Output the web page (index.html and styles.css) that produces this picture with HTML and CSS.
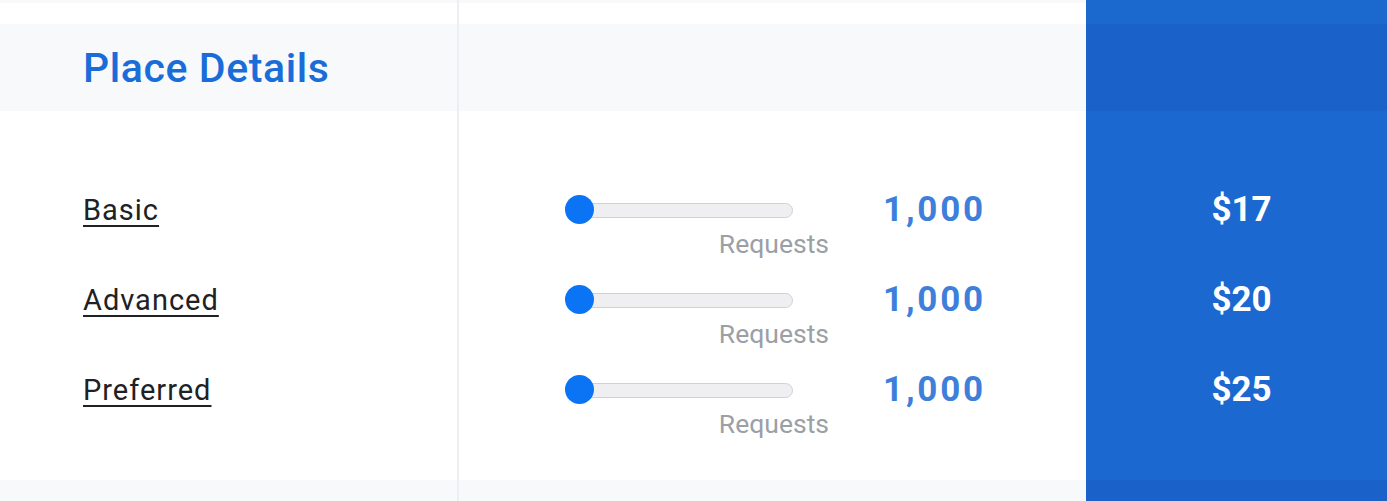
FILE: index.html
```html
<!DOCTYPE html>
<html>
<head>
<meta charset="utf-8">
<link rel="stylesheet" href="styles.css">
</head>
<body>
<div class="table">
  <div class="row row-top">
    <div class="cell c1"></div>
    <div class="cell c2"></div>
    <div class="cell c3"></div>
  </div>
  <div class="row row-head">
    <div class="cell c1"><h2 class="title">Place Details</h2></div>
    <div class="cell c2"></div>
    <div class="cell c3"></div>
  </div>
  <div class="row row-body">
    <div class="cell c1">
      <div class="list">
        <div class="item"><a class="sku">Basic</a></div>
        <div class="item"><a class="sku">Advanced</a></div>
        <div class="item"><a class="sku">Preferred</a></div>
      </div>
    </div>
    <div class="cell c2">
      <div class="list">
        <div class="item calc">
          <div class="slider">
            <div class="track"><span class="thumb"></span></div>
            <div class="unit">Requests</div>
          </div>
          <div class="count">1,000</div>
        </div>
        <div class="item calc">
          <div class="slider">
            <div class="track"><span class="thumb"></span></div>
            <div class="unit">Requests</div>
          </div>
          <div class="count">1,000</div>
        </div>
        <div class="item calc">
          <div class="slider">
            <div class="track"><span class="thumb"></span></div>
            <div class="unit">Requests</div>
          </div>
          <div class="count">1,000</div>
        </div>
      </div>
    </div>
    <div class="cell c3">
      <div class="list">
        <div class="item price">$17</div>
        <div class="item price">$20</div>
        <div class="item price">$25</div>
      </div>
    </div>
  </div>
  <div class="row row-foot">
    <div class="cell c1"></div>
    <div class="cell c2"></div>
    <div class="cell c3"></div>
  </div>
</div>
</body>
</html>
```

FILE: styles.css
```css
html, body {
  margin: 0;
  padding: 0;
  background: #ffffff;
  font-family: Roboto, "Liberation Sans", sans-serif;
}

.table {
  display: flex;
  flex-direction: column;
  width: 1387px;
  height: 501px;
  overflow: hidden;
}

.row {
  display: grid;
  grid-template-columns: 459px 627px 1fr;
}

.cell.c1 {
  border-right: 2px solid #eceef1;
}

.cell.c3 {
  background: #1a68d0;
}

/* top strip */
.row-top {
  height: 24px;
  background: linear-gradient(#f8f9fa 0 3px, #ffffff 3px);
}
.row-top .c3 {
  background: #1b69cf;
}

/* header */
.row-head {
  height: 87px;
  background: #f8f9fa;
}
.row-head .c3 {
  background: #1a62ca;
}
.title {
  margin: 0;
  padding: 20px 0 0 83px;
  font-size: 41px;
  line-height: 48px;
  font-weight: 500;
  color: #1a6dd8;
  letter-spacing: 0.6px;
}

/* body */
.row-body {
  height: 369px;
}
.list {
  display: flex;
  flex-direction: column;
  padding-top: 84px;
}
.item {
  height: 90px;
}
.c1 .list {
  padding-left: 83px;
}
.sku {
  display: inline-block;
  font-size: 29px;
  line-height: 30px;
  color: #202124;
  letter-spacing: 1px;
  text-decoration: underline;
  text-decoration-thickness: 2px;
  text-underline-offset: 5px;
}

.calc {
  display: flex;
  align-items: flex-start;
  padding-left: 106px;
}
.slider {
  width: 264px;
  display: flex;
  flex-direction: column;
}
.track {
  position: relative;
  width: 224px;
  height: 13px;
  margin-top: 8px;
  margin-left: 2px;
  border: 1px solid #cfd1d4;
  border-radius: 8px;
  background: #efeff1;
}
.thumb {
  position: absolute;
  left: -3px;
  top: -9px;
  width: 29px;
  height: 29px;
  border-radius: 50%;
  background: #0b74f5;
}
.unit {
  align-self: flex-end;
  margin-top: 14px;
  font-size: 26.5px;
  line-height: 24px;
  color: #9aa0a6;
}
.count {
  margin-left: 54px;
  font-size: 35px;
  line-height: 30px;
  font-weight: 700;
  color: #3f7fdc;
  letter-spacing: 2.8px;
}

.c3 .list {
  align-items: center;
  padding-left: 10px;
}
.price {
  font-size: 35px;
  line-height: 30px;
  font-weight: 700;
  color: #ffffff;
}

/* footer */
.row-foot {
  height: 21px;
  background: #f8f9fa;
}
.row-foot .c3 {
  background: #1a62ca;
}
```
